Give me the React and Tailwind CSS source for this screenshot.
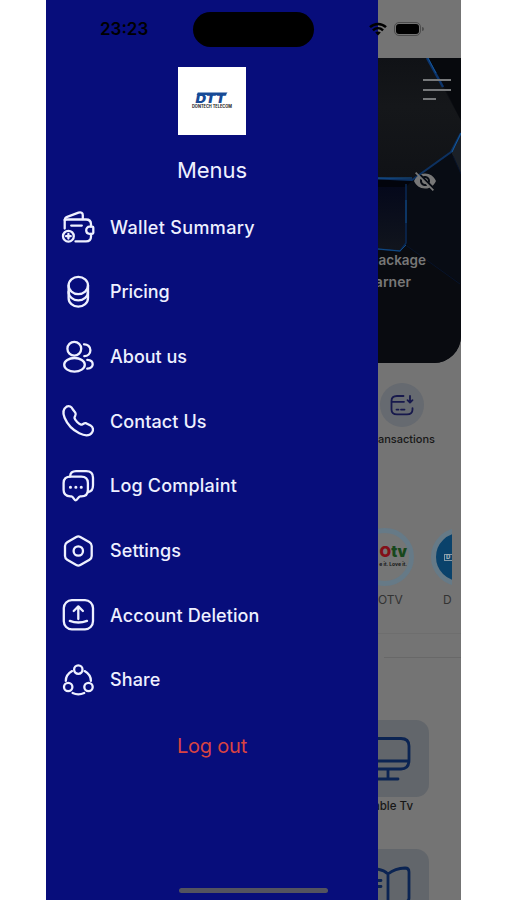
import { MdVisibilityOff } from "react-icons/md";

const icons = {
  wallet: (
    <>
      <path d="M2.7 17.5V9.5C2.7 7.6 3.5 6.5 5.2 5.8L16.5 1.7C19 .9 20.8 1.8 20.8 4.2V8" />
      <path d="M2.7 9C3.2 8.6 4 8.5 5 8.5H24C27 8.5 29 10.4 29 13.2V15.6M29 23V25.5C29 28.5 27 30.4 24 30.4H13.5" />
      <path d="M31.3 16.6V21.8C31.3 22.4 30.9 22.8 30.2 22.8H27.5C25.6 22.8 24.2 21.4 24.2 19.3S25.6 15.7 27.5 15.7H30.2C30.9 15.7 31.3 16 31.3 16.6Z" />
      <path d="M9.2 14.6H19.8" />
      <circle cx="6.4" cy="25.2" r="5.4" />
      <path d="M6.4 22.9V27.5M4.1 25.2H8.7" />
    </>
  ),
  coins: (
    <>
      <ellipse cx="16.3" cy="9.5" rx="9.7" ry="8.6" />
      <path d="M6.6 9.5V22C6.6 27 10.9 30.7 16.3 30.7S26 27 26 22V9.5" />
      <path d="M6.6 15.8C6.6 20.6 10.9 24.4 16.3 24.4S26 20.6 26 15.8" />
    </>
  ),
  users: (
    <>
      <circle cx="12.3" cy="7.8" r="6.9" />
      <ellipse cx="12.5" cy="23.8" rx="10.3" ry="6.8" />
      <path d="M22 3.3C25.6 3.1 28.4 5.8 28.4 9.2S25.8 15 22.3 15.1" />
      <path d="M25.3 18.9C28.6 19.1 30.7 20.8 30.7 23.2S28.4 27.3 25.2 27.7" />
    </>
  ),
  phone: (
    <path d="M4.6 1.6C7.2 .3 9.5 1.7 10.7 4.2L13.3 7.6C14.8 9.8 12.5 11.2 12.5 13C13 15.4 16.9 19.2 19 19.7C20.8 19.7 21.8 17.6 24 18.2L28.6 20.6C31.2 22 31.7 25.2 30 27.6C27 31.7 22.5 30.8 17.3 28.3C10.8 25.1 5.2 19 2.6 12.8C.9 8.6 1 3.9 4.6 1.6Z" />
  ),
  chat: (
    <>
      <path d="M8.1 6.5C8.3 2.8 10.5 1.2 14 1.2H24.2C28.8 1.2 31 3.7 31 7.7V15.3C31 19.5 29.7 21.6 26.2 22" />
      <path d="M8.6 6.6H19.2C23.7 6.6 25.9 8.8 25.9 13V20C25.9 24.2 23.7 26.4 19.2 26.4H18.2C16.2 26.5 15.5 30.3 13.8 30.3S11.5 26.6 9.4 26.4H8.4C3.9 26.2 1.6 24.2 1.6 20V13C1.6 8.8 4.1 6.6 8.6 6.6Z" />
      <path d="M8.4 17.3H8.5M13.8 17.3H13.9M19.2 17.3H19.3" strokeWidth="3" />
    </>
  ),
  settings: (
    <>
      <path d="M14.3 1.9C15.7 1.1 16.9 1.1 18.3 1.9L27.5 7.2C29 8.1 29.7 9.2 29.7 11V21C29.7 22.7 29 23.8 27.5 24.7L18.3 30.1C16.9 30.9 15.7 30.9 14.3 30.1L5.2 24.7C3.7 23.8 3 22.7 3 21V11C3 9.2 3.7 8.1 5.2 7.2Z" />
      <circle cx="16.3" cy="16" r="4.7" />
    </>
  ),
  upload: (
    <>
      <rect x="1.8" y="1.1" width="29.2" height="29.2" rx="8" />
      <path d="M16.3 20V7.6M11.7 12L16.3 7.4L20.9 12" />
      <path d="M7.8 21.9C13.2 23.9 19.5 23.9 25 21.9" />
    </>
  ),
  share: (
    <>
      <circle cx="16.3" cy="5.6" r="4.2" />
      <circle cx="6.2" cy="23" r="4.2" />
      <circle cx="26.5" cy="23" r="4.2" />
      <path d="M10.1 7.1C6 9.5 3.8 13 3.8 16.9M22.6 7.1C26.7 9.5 28.9 13 28.9 16.9M10.6 29C14.3 30.7 18.4 30.7 22.2 29" />
    </>
  ),
};

const menuItems = [
  { label: "Wallet Summary", icon: "wallet", tracking: "tracking-[0.35px]" },
  { label: "Pricing", icon: "coins", tracking: "tracking-[-0.1px]" },
  { label: "About us", icon: "users", tracking: "tracking-[0px]" },
  { label: "Contact Us", icon: "phone", tracking: "tracking-[0.1px]" },
  { label: "Log Complaint", icon: "chat", tracking: "tracking-[0.2px]" },
  { label: "Settings", icon: "settings", tracking: "tracking-[0.1px]" },
  { label: "Account Deletion", icon: "upload", tracking: "tracking-[0.1px]" },
  { label: "Share", icon: "share", tracking: "tracking-[0.1px]" },
];

function StatusBar() {
  return (
    <div className="absolute inset-x-0 top-0 z-10 flex h-[58px] items-center text-black">
      <span className="ml-[54px] w-[93px] pt-px text-[17px] font-semibold leading-none">23:23</span>
      <div className="h-[35px] w-[121px] rounded-full bg-black" />
      <svg viewBox="0 0 18 14" className="ml-[55px] h-[14px] w-[18px]" fill="none" stroke="currentColor" strokeWidth="2.5">
        <path d="M1 5.2C5.6 .8 12.4 .8 17 5.2" />
        <path d="M3.9 8.3C6.9 5.5 11.1 5.5 14.1 8.3" />
        <path d="M9 13.4L6.2 10.5C7.8 9.1 10.2 9.1 11.8 10.5Z" fill="currentColor" stroke="none" />
      </svg>
      <div className="ml-[7px] h-[14px] w-[27px] rounded-[5px] border border-[#4b4b4b] p-px">
        <div className="h-full rounded-[3px] bg-black" />
      </div>
      <div className="ml-px h-[4px] w-[2px] rounded-r-full bg-[#4b4b4b]" />
    </div>
  );
}

function Logo() {
  return (
    <div className="flex h-[68px] w-[68px] items-center justify-center bg-white">
      <svg viewBox="0 0 48 28" className="h-[28px] w-[48px] overflow-visible">
        <path d="M9.8 5.4H39.5L37.6 8H8.6Z" fill="#174a96" />
        <text x="7.5" y="16" fontFamily="Inter, sans-serif" fontSize="11.5" fontWeight="900" fontStyle="italic" textLength="30" lengthAdjust="spacingAndGlyphs" fill="#174a96">DTT</text>
        <text x="4" y="21.2" fontFamily="Inter, sans-serif" fontSize="4.2" fontWeight="700" textLength="40" lengthAdjust="spacingAndGlyphs" fill="#222222">DONTECH TELECOM</text>
      </svg>
    </div>
  );
}

function Drawer() {
  return (
    <aside className="flex w-[332px] shrink-0 flex-col items-center bg-[#070d7b] pt-[67px]">
      <Logo />
      <h1 className="mt-[19px] text-[22px] leading-[32px] tracking-[-0.1px] text-[#eef0ff]">Menus</h1>
      <nav className="mt-[9px] w-full pl-4">
        {menuItems.map((item) => (
          <a key={item.label} className="flex h-[64.65px] items-center gap-4">
            <svg viewBox="0 0 32 32" className="h-8 w-8 overflow-visible text-[#eef0ff]" fill="none" stroke="currentColor" strokeWidth="2.3" strokeLinecap="round" strokeLinejoin="round">
              {icons[item.icon]}
            </svg>
            <span className={`pt-px text-[18px] font-medium leading-none text-[#eef0ff] ${item.tracking}`}>{item.label}</span>
          </a>
        ))}
      </nav>
      <button type="button" className="mt-[19px] text-[20px] leading-[30px] tracking-[-0.2px] text-[#d84343]">Log out</button>
    </aside>
  );
}

function Hero() {
  return (
    <section className="relative mt-[58px] h-[305px] shrink-0 overflow-hidden rounded-br-[27px] bg-[#0b0d12]">
      <svg viewBox="0 0 83 305" className="absolute inset-0 h-full w-full" fill="none">
        <defs>
          <linearGradient id="shade" x1="0" y1="0" x2="0" y2="1">
            <stop offset="0" stopColor="#101216" />
            <stop offset="0.4" stopColor="#15171a" />
            <stop offset="1" stopColor="#101216" />
          </linearGradient>
          <linearGradient id="cell" x1="0" y1="0" x2="0" y2="1">
            <stop offset="0" stopColor="#04081b" />
            <stop offset="1" stopColor="#11151d" />
          </linearGradient>
        </defs>
        <path d="M0 130H83V305H0Z" fill="#090b10" />
        <path d="M0 0H48L65 29L83 63V78L73 94L35 121H0Z" fill="url(#shade)" />
        <path d="M50 0H83V62L67 30Z" fill="#07090d" />
        <path d="M73 94L83 77V116Z" fill="#1b2027" />
        <path d="M35 121L73 94L83 116V226L28 188V126Z" fill="#080c14" />
        <path d="M0 126H28V187L22 193L0 192Z" fill="url(#cell)" />
        <path d="M0 122H35L28 129H0Z" fill="#02040c" />
        <path d="M49 0L65 29" stroke="#0c346b" strokeWidth="2.5" />
        <path d="M50 0L58 15" stroke="#14579a" strokeWidth="1" />
        <path d="M0 120.5L34 122L73 94L83 75" stroke="#0d3160" strokeWidth="2" />
        <path d="M0 120H34M74 94L83 75" stroke="#14599d" strokeWidth="1" />
        <path d="M28 126V185L22 193L0 191" stroke="#0a2954" strokeWidth="1.5" />
        <path d="M28 142V165M28 187L22 193L0 191" stroke="#114a83" strokeWidth="1" />
        <path d="M29 188L82 226M75 98L83 116" stroke="#08142b" />
      </svg>
      <div className="relative flex h-full flex-col items-end">
        <div className="mr-[10px] mt-[21px] flex w-[28px] flex-col gap-[7.5px]">
          <div className="h-[2px] bg-[#77797b]" />
          <div className="h-[2px] bg-[#77797b]" />
          <div className="h-[2px] w-[13px] bg-[#77797b]" />
        </div>
        <MdVisibilityOff className="mr-[24px] mt-[69px] h-6 w-6 text-[#777777]" />
        <p className="mr-[35px] mt-[57px] text-[13.5px] font-semibold leading-[20px] text-[#777777]">ackage</p>
        <p className="mr-[50px] mt-px text-[14px] font-semibold leading-[22px] text-[#777777]">arner</p>
      </div>
    </section>
  );
}

function HomePage() {
  return (
    <main className="flex min-w-0 flex-1 flex-col overflow-hidden bg-[#747474]">
      <Hero />
      <section className="mt-[20px] flex shrink-0 flex-col">
        <div className="ml-[2px] flex h-[44px] w-[44px] items-center justify-center rounded-full bg-[#666a70]">
          <svg viewBox="0 0 24 24" className="h-6 w-6 overflow-visible" fill="none" stroke="#17194c" strokeWidth="1.8" strokeLinecap="round" strokeLinejoin="round">
            <path d="M13.5 3H7C3.2 3 1.5 4.7 1.5 8V16.5C1.5 19.8 3.2 21.4 7 21.4H17C21 21.4 22.5 19.8 22.5 16.5V15.2M1.8 8.8H14" />
            <path d="M6.5 16.6H8.5M11 16.6H14.5M20 3V9.5M17.5 7.2L20 9.7L22.5 7.2" />
          </svg>
        </div>
        <p className="mr-[26px] mt-[4px] self-end whitespace-nowrap text-[11px] font-medium leading-[16px] text-[#171717]">ansactions</p>
      </section>
      <section className="mr-[9px] mt-[81px] flex shrink-0 gap-[17px] overflow-hidden">
        <div className="-ml-[22px] flex w-[58px] shrink-0 flex-col">
          <div className="flex h-[58px] w-[58px] flex-col items-end justify-center rounded-full border-[5px] border-[#667a87] bg-[#757676] pr-[2px]">
            <p className="-mt-1 text-[15px] font-black leading-[18px] text-[#17471c]"><span className="text-[#831018]">O</span>tv</p>
            <p className="whitespace-nowrap text-[5px] font-bold leading-[6px] text-[#171717]">e it. Love it.</p>
          </div>
          <p className="ml-[22px] mt-[6px] text-[12px] leading-[16px] text-[#333333]">OTV</p>
        </div>
        <div className="flex w-[58px] shrink-0 flex-col">
          <div className="flex h-[58px] w-[58px] items-center rounded-full border-[5px] border-[#667a87] bg-[#0a426b] pl-[8px]">
            <span className="flex h-[7px] w-5 items-center border border-[#8599a6] pl-px text-[6px] font-black leading-none text-[#9caab3]">D</span>
          </div>
          <p className="ml-[12px] mt-[6px] text-[12px] leading-[16px] text-[#333333]">D</p>
        </div>
      </section>
      <div className="mt-[25px] h-px shrink-0 bg-[#6e6e6e]" />
      <div className="ml-[6px] mt-[23px] h-px shrink-0 bg-[#686868]" />
      <section className="mt-[62px] flex shrink-0 flex-col">
        <div className="mr-[32px] flex h-[77px] items-center rounded-r-[13px] bg-[#62666b]">
          <svg viewBox="0 0 34 46" className="h-[46px] w-[34px]" fill="none" stroke="#0b2453" strokeWidth="2.8" strokeLinecap="round">
            <path d="M-8 2.5H23C28.5 2.5 31 5 31 10V24C31 30 28.5 33 23 33H-8M0 25H31M10 33V43M0 43H20" />
          </svg>
        </div>
        <p className="mr-[48px] mt-px self-end whitespace-nowrap text-[11.5px] font-medium leading-[16px] text-[#171717]">able Tv</p>
      </section>
      <section className="mr-[32px] mt-[35px] h-[77px] shrink-0 rounded-r-[13px] bg-[#62666b] pt-[17px]">
        <svg viewBox="0 0 34 46" className="h-[46px] w-[34px]" fill="none" stroke="#0b2453" strokeWidth="2.8" strokeLinecap="round" strokeLinejoin="round">
          <path d="M-4 3C2 3 7 5 10 8C15 4 21 2.2 27 2C29.7 2 31 3.5 31 6V32C31 34.5 29.5 35.5 27 36C20 37 15 39 10 42V8M0 14.5H3M0 20.5H3" />
        </svg>
      </section>
    </main>
  );
}

export default function App() {
  return (
    <div className="h-[900px] w-[507px] overflow-hidden bg-white pl-[46px] font-['Inter',sans-serif]">
      <div className="relative flex h-[900px] w-[415px] overflow-hidden">
        <Drawer />
        <HomePage />
        <StatusBar />
        <div className="absolute bottom-[7px] left-[133px] h-[5px] w-[149px] rounded-full bg-[#53535f]" />
      </div>
    </div>
  );
}
